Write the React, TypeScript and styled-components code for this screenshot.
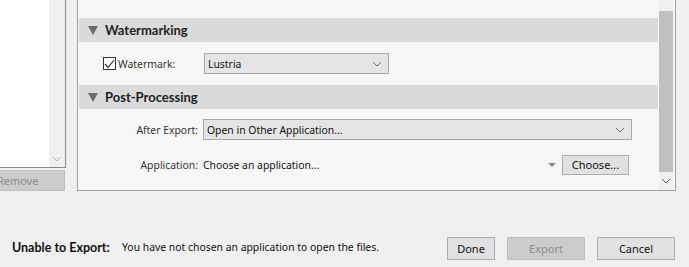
import React from 'react'
import styled, { createGlobalStyle } from 'styled-components'

const Global = createGlobalStyle`
  html, body {
    margin: 0;
    padding: 0;
    background: #f0f0f0;
  }
  body {
    font-family: "Noto Sans", "Open Sans", sans-serif;
    font-size: 10.4px;
    color: #1a1a1a;
  }
`

const Chevron: React.FC<{ color?: string }> = ({ color = '#6a6a6a' }) => (
  <svg width="10" height="6" viewBox="0 0 10 6">
    <path d="M1 1 L5 5 L9 1" fill="none" stroke={color} strokeWidth="1" />
  </svg>
)

const Tri: React.FC = () => (
  <svg width="10" height="9" viewBox="0 0 10 9">
    <path d="M0 0 H10 L5 9 Z" fill="#6b6b6b" />
  </svg>
)

interface SectionProps {
  title: string
  children?: React.ReactNode
}
const Section: React.FC<SectionProps> = ({ title, children }) => (
  <>
    <Header>
      <Tri />
      <HeaderTitle>{title}</HeaderTitle>
    </Header>
    {children}
  </>
)

export default function App() {
  return (
    <Page>
      <Global />
      <Top>
        <LeftCol>
          <ListBox>
            <ListBody />
            <ListScroll>
              <Chevron color="#b8b8b8" />
            </ListScroll>
          </ListBox>
          <RemoveBtn>Remove</RemoveBtn>
        </LeftCol>
        <Panel>
          <Content>
            <Spacer />
            <Section title="Watermarking">
              <WmRow>
                <Check>
                  <svg width="11" height="10" viewBox="0 0 11 10">
                    <path d="M1 5 L4 8.5 L10 1" fill="none" stroke="#333" strokeWidth="1.2" />
                  </svg>
                </Check>
                <WmLabel>Watermark:</WmLabel>
                <Select w="185px">
                  <span>Lustria</span>
                  <Chevron />
                </Select>
              </WmRow>
            </Section>
            <Section title="Post-Processing">
              <Rows>
                <Row>
                  <Label>After Export:</Label>
                  <Select w="429px">
                    <span>Open in Other Application...</span>
                    <Chevron />
                  </Select>
                </Row>
                <Row>
                  <Label>Application:</Label>
                  <AppValue>Choose an application...</AppValue>
                  <SmallTri />
                  <Btn w="67px" h="20px">Choose...</Btn>
                </Row>
              </Rows>
            </Section>
          </Content>
          <VScroll>
            <Thumb />
            <ScrollArrow>
              <Chevron color="#555" />
            </ScrollArrow>
          </VScroll>
        </Panel>
      </Top>
      <Footer>
        <ErrTitle>Unable to Export:</ErrTitle>
        <ErrMsg>You have not chosen an application to open the files.</ErrMsg>
        <Buttons>
          <Btn w="48px" h="23px">Done</Btn>
          <Btn w="78px" h="23px" disabled>Export</Btn>
          <Btn w="78px" h="23px">Cancel</Btn>
        </Buttons>
      </Footer>
    </Page>
  )
}

const Page = styled.div`
  width: 689px;
  height: 267px;
  overflow: hidden;
  display: flex;
  flex-direction: column;
`

const Top = styled.div`
  display: flex;
  height: 191px;
  gap: 11px;
`

const LeftCol = styled.div`
  width: 66px;
  display: flex;
  flex-direction: column;
  gap: 2px;
`

const ListBox = styled.div`
  height: 167px;
  display: flex;
  border-right: 1px solid #8a8a8a;
  border-bottom: 1px solid #8a8a8a;
`

const ListBody = styled.div`
  flex: 1;
  background: #ffffff;
`

const ListScroll = styled.div`
  width: 16px;
  background: #f0f0f0;
  display: flex;
  align-items: flex-end;
  justify-content: center;
  padding-bottom: 5px;
`

const RemoveBtn = styled.div`
  width: 64px;
  height: 19px;
  background: #cccccc;
  border: 1px solid #bfbfbf;
  border-left: none;
  color: #8c8c8c;
  line-height: 19px;
  text-indent: -3px;
  font-size: 11px;
`

const Panel = styled.div`
  width: 597px;
  height: 190px;
  border: 1px solid #a0a0a0;
  border-top: none;
  background: #f7f7f7;
  display: flex;
`

const Content = styled.div`
  flex: 1;
  padding-left: 1px;
  padding-right: 1px;
`

const Spacer = styled.div`
  height: 18px;
`

const Header = styled.div`
  height: 24px;
  background: #dadada;
  display: flex;
  align-items: center;
  padding-left: 9px;
  gap: 7px;
`

const HeaderTitle = styled.span`
  font-family: Lato, "Noto Sans", sans-serif;
  font-weight: bold;
  font-size: 13px;
  color: #1e1e1e;
`

const WmRow = styled.div`
  height: 43px;
  display: flex;
  align-items: center;
  padding-left: 24px;
`

const Check = styled.div`
  width: 13px;
  height: 13px;
  border: 1px solid #333;
  background: #fff;
  box-sizing: border-box;
  display: flex;
  align-items: center;
  justify-content: center;
  margin-right: 2px;
`

const WmLabel = styled.span`
  width: 86px;
  color: #333;
`

const Select = styled.div<{ w: string }>`
  width: ${p => p.w};
  height: 21px;
  box-sizing: border-box;
  border: 1px solid #a9a9a9;
  background: #e5e5e5;
  display: flex;
  align-items: center;
  justify-content: space-between;
  padding: 0 6px 0 3px;
  color: #111;
`

const Rows = styled.div`
  display: flex;
  flex-direction: column;
  padding-top: 10px;
  gap: 14px;
`

const Row = styled.div`
  display: flex;
  align-items: center;
  height: 21px;
`

const Label = styled.span`
  width: 119px;
  text-align: right;
  padding-right: 5px;
  color: #333;
`

const AppValue = styled.span`
  width: 345px;
  color: #111;
`

const SmallTri = styled.span`
  width: 0;
  height: 0;
  border-left: 4px solid transparent;
  border-right: 4px solid transparent;
  border-top: 4px solid #8a8a8a;
  margin-right: 6px;
`

const Btn = styled.div<{ w: string; h: string; disabled?: boolean }>`
  width: ${p => p.w};
  height: ${p => p.h};
  box-sizing: border-box;
  border: 1px solid ${p => (p.disabled ? '#bfbfbf' : '#adadad')};
  background: ${p => (p.disabled ? '#cccccc' : '#e1e1e1')};
  color: ${p => (p.disabled ? '#8c8c8c' : '#111')};
  display: flex;
  align-items: center;
  justify-content: center;
  font-size: 11px;
`

const VScroll = styled.div`
  width: 14px;
  margin-right: 2px;
  background: #f0f0f0;
  display: flex;
  flex-direction: column;
  padding-top: 11px;
`

const Thumb = styled.div`
  height: 161px;
  background: #c0c0c0;
`

const ScrollArrow = styled.div`
  flex: 1;
  display: flex;
  align-items: center;
  justify-content: center;
`

const Footer = styled.div`
  flex: 1;
  display: flex;
  align-items: flex-start;
  padding: 46px 14px 0 12px;
  box-sizing: border-box;
`

const ErrTitle = styled.span`
  font-family: Lato, "Noto Sans", sans-serif;
  font-weight: bold;
  font-size: 12.5px;
  width: 110px;
  color: #111;
  line-height: 21px;
`

const ErrMsg = styled.span`
  flex: 1;
  color: #111;
  line-height: 21px;
`

const Buttons = styled.div`
  display: flex;
  gap: 12px;
`
